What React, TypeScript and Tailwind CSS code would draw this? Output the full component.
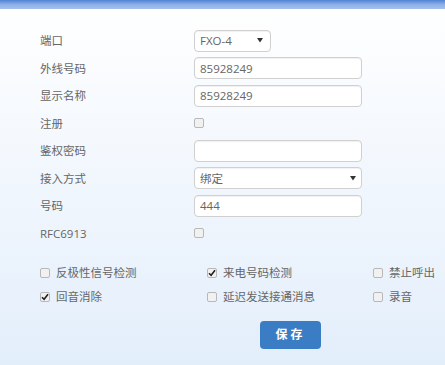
import React from "react";

const font = { fontFamily: '"Open Sans","Noto Sans CJK SC",sans-serif' };

function Check({ checked }: { checked?: boolean }) {
  return (
    <span className="inline-flex h-[10px] w-[10px] items-center justify-center rounded-[2px] border border-[#b8b8b8] bg-[#f1f1f1]">
      {checked && (
        <svg width="8" height="8" viewBox="0 0 8 8">
          <path d="M1 4.2 L3.1 6.3 L7 1.2" fill="none" stroke="#222" strokeWidth="1.6" />
        </svg>
      )}
    </span>
  );
}

function Caret() {
  return (
    <svg width="6" height="5" viewBox="0 0 6 5">
      <path d="M0 0 L6 0 L3 4.5 Z" fill="#333" />
    </svg>
  );
}

function Row({ label, children }: { label: string; children: React.ReactNode }) {
  return (
    <div className="flex h-[27.5px] items-center">
      <div className="w-[154px] text-[11.5px] text-[#666]">{label}</div>
      {children}
    </div>
  );
}

const boxCls =
  "flex h-[22px] items-center rounded-[4px] border border-[#d0d0d0] bg-white px-[5px] text-[11.5px] text-[#666] shadow-[inset_0_1px_1px_rgba(0,0,0,0.06)]";

export default function App() {
  return (
    <div
      className="h-[365px] w-[445px] overflow-hidden bg-gradient-to-b from-white to-[#e3eefb]"
      style={font}
    >
      <div className="h-[9px] bg-gradient-to-b from-[#4f82d3] via-[#8eb0e8] to-[#a4c0ee]" />
      <div className="pl-[40px] pt-[18px]">
        <Row label="端口">
          <div className={boxCls + " w-[77px] justify-between pr-[7px]"}>
            <span>FXO-4</span>
            <Caret />
          </div>
        </Row>
        <Row label="外线号码">
          <div className={boxCls + " w-[168px]"}>85928249</div>
        </Row>
        <Row label="显示名称">
          <div className={boxCls + " w-[168px]"}>85928249</div>
        </Row>
        <Row label="注册">
          <Check />
        </Row>
        <Row label="鉴权密码">
          <div className={boxCls + " w-[168px]"}></div>
        </Row>
        <Row label="接入方式">
          <div className={boxCls + " w-[168px] justify-between pr-[5px]"}>
            <span>绑定</span>
            <Caret />
          </div>
        </Row>
        <Row label="号码">
          <div className={boxCls + " w-[168px]"}>444</div>
        </Row>
        <Row label="RFC6913">
          <Check />
        </Row>

        <div className="mt-[17px] grid grid-cols-[167px_166px_auto] gap-y-[7px] text-[11.5px] text-[#666]">
          <div className="flex items-center gap-[6px]"><Check /><span>反极性信号检测</span></div>
          <div className="flex items-center gap-[6px]"><Check checked /><span>来电号码检测</span></div>
          <div className="flex items-center gap-[6px]"><Check /><span>禁止呼出</span></div>
          <div className="flex items-center gap-[6px]"><Check checked /><span>回音消除</span></div>
          <div className="flex items-center gap-[6px]"><Check /><span>延迟发送接通消息</span></div>
          <div className="flex items-center gap-[6px]"><Check /><span>录音</span></div>
        </div>

        <div className="mt-[15px] pl-[220px]">
          <button className="h-[28px] w-[61px] rounded-[4px] bg-[#3b7dc4] text-[12px] font-bold tracking-[3px] text-white">
            保存
          </button>
        </div>
      </div>
    </div>
  );
}
